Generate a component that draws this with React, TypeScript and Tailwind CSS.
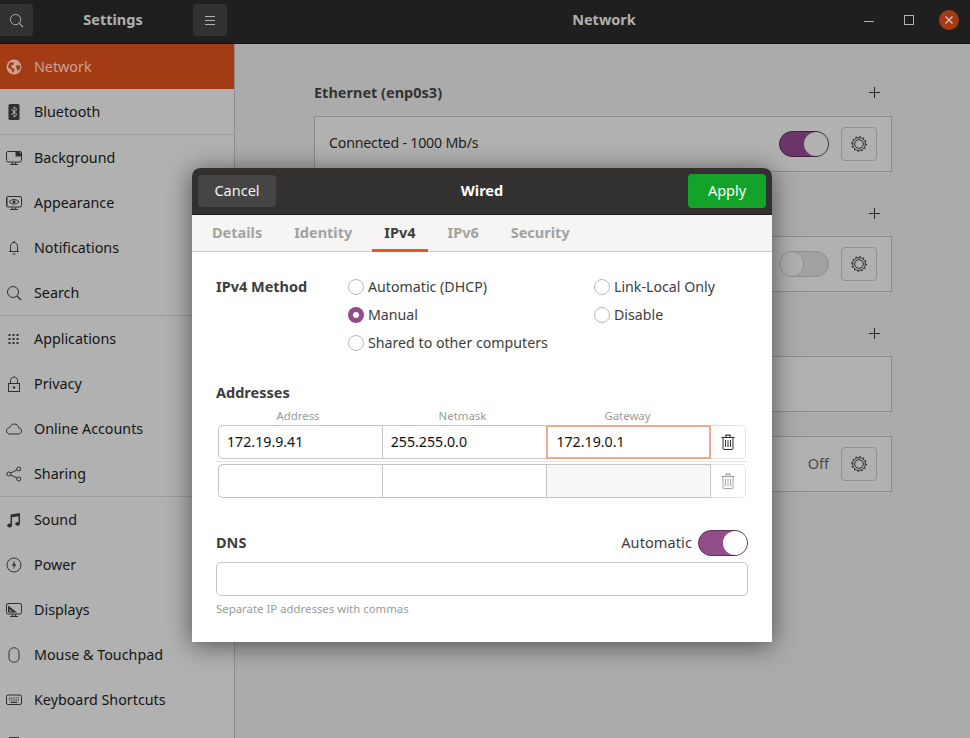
import type { ReactNode } from "react";

const FONT = "font-['Noto_Sans','Open_Sans',sans-serif]";

const Glyph = ({ children, className = "w-4 h-4" }: { children: ReactNode; className?: string }) => (
  <svg viewBox="0 0 16 16" fill="none" stroke="currentColor" strokeWidth="1" className={className}>
    {children}
  </svg>
);

const ICONS: Record<string, ReactNode> = {
  network: (
    <>
      <circle cx="8" cy="8" r="7.5" fill="currentColor" stroke="none" />
      <path d="M3 4.500 6 3l2 1-1 2-2 .5L6 9l2 .5.5 2-2 2.500-1-3.500L2 8.500z" fill="#a33c15" stroke="none" />
      <path d="M10 6.500 13.500 6l1 3-2.500 3-1.500-2.500z" fill="#a33c15" stroke="none" />
    </>
  ),
  bluetooth: (
    <>
      <rect x="2.500" y="0" width="11" height="16" rx="1.500" fill="currentColor" stroke="none" />
      <path d="M5 5.200 11 10.500 8 13.200V2.800l3 2.700L5 10.800" stroke="#b1b1b1" strokeWidth="1" />
    </>
  ),
  background: (
    <>
      <rect x="0.500" y="1.500" width="15" height="10.500" rx="1.500" />
      <path d="M9.500 2v4.500H15V3.500L13.500 2z" fill="currentColor" stroke="none" />
      <path d="M4 14.500h8M6.500 12.500v2h3v-2" strokeWidth="1.200" />
    </>
  ),
  appearance: (
    <>
      <rect x="0.500" y="1.500" width="15" height="10.500" rx="1.500" />
      <path d="M3 6.800c2.800-3 7.200-3 10 0-2.800 3-7.200 3-10 0z" />
      <circle cx="8" cy="6.800" r="1.500" fill="currentColor" stroke="none" />
      <path d="M1.500 3.500v7" strokeDasharray="1 1" strokeWidth="1" />
      <path d="M4 14.500h8M6.500 12.500v2h3v-2" strokeWidth="1.200" />
    </>
  ),
  notifications: (
    <>
      <path d="M4.500 11.500V6.500C4.500 4 6 2.500 8 2.500s3.500 1.500 3.500 4v5zM3 11.500h10" />
      <path d="M8 1v1.500M6.500 14h3" strokeWidth="1.200" />
    </>
  ),
  search: (
    <>
      <circle cx="7" cy="7" r="5.500" />
      <path d="m11 11 4 4" strokeWidth="1.200" />
    </>
  ),
  applications: (
    <g fill="currentColor" stroke="none">
      {[3, 7, 11].flatMap((y) =>
        [2.500, 6.500, 10.500].map((x) => <rect key={`${x}-${y}`} x={x} y={y} width="2" height="2" />)
      )}
    </g>
  ),
  privacy: (
    <>
      <rect x="2.500" y="7.500" width="11" height="8" />
      <path d="M4.500 7.500V4.500C4.500 2.500 6 1 8 1s3.500 1.500 3.500 3.500v3" />
      <circle cx="8" cy="11.500" r="1.200" fill="currentColor" stroke="none" />
    </>
  ),
  online: (
    <path d="M4 13C1.800 13 .5 11.500.5 9.800.5 8 2 6.800 3.500 6.800 4.200 4.500 6 3 8.300 3c2.500 0 4.200 1.800 4.500 4 1.600.2 2.700 1.300 2.700 3 0 1.700-1.300 3-3 3z" />
  ),
  sharing: (
    <>
      <circle cx="2.800" cy="8" r="2" />
      <circle cx="12.800" cy="3" r="2" />
      <circle cx="12.800" cy="13" r="2" />
      <path d="M4.600 7.100 11 3.900M4.600 8.900 11 12.100" />
    </>
  ),
  sound: (
    <g fill="currentColor" stroke="none">
      <path d="M4.500 2.500 14 1v10.500h-1.500V4.200l-6.500 1v8.300H4.500z" />
      <ellipse cx="3.600" cy="13.500" rx="2.400" ry="1.900" />
      <ellipse cx="11.600" cy="11.800" rx="2.400" ry="1.900" />
    </g>
  ),
  power: (
    <>
      <circle cx="8" cy="8" r="7" />
      <path d="M8.800 3.500 5.800 8.500h2l-.6 4 3-5.200H8.200z" fill="currentColor" stroke="none" />
    </>
  ),
  displays: (
    <>
      <rect x="0.500" y="1.500" width="15" height="10.500" rx="1.500" />
      <path d="M2 3.500 11 10.500H2z" fill="currentColor" stroke="none" />
      <path d="M3.500 7.200v2.200h2.700z" fill="#b0b0b0" stroke="none" />
      <path d="M4 14.500h8M6.500 12.500v2h3v-2" strokeWidth="1.200" />
    </>
  ),
  mouse: <rect x="3" y="0.800" width="10" height="14.400" rx="4.500" />,
  keyboard: (
    <>
      <rect x="0.500" y="3" width="15" height="9.500" rx="1.500" />
      <path d="M3 6h10M3 8h10" strokeDasharray="1 .8" />
      <path d="M4.500 10.300h7" strokeWidth="1.200" />
    </>
  ),
  printers: (
    <>
      <rect x="3.500" y="0.500" width="9" height="5" />
      <rect x="0.500" y="5.500" width="15" height="7" rx="1" />
    </>
  ),
};

// the row after Keyboard Shortcuts is cut by the window, only its icon shows
const GROUPS = [
  [
    ["network", "Network"],
    ["bluetooth", "Bluetooth"],
  ],
  [
    ["background", "Background"],
    ["appearance", "Appearance"],
    ["notifications", "Notifications"],
    ["search", "Search"],
  ],
  [
    ["applications", "Applications"],
    ["privacy", "Privacy"],
    ["online", "Online Accounts"],
    ["sharing", "Sharing"],
  ],
  [
    ["sound", "Sound"],
    ["power", "Power"],
    ["displays", "Displays"],
    ["mouse", "Mouse & Touchpad"],
    ["keyboard", "Keyboard Shortcuts"],
    ["printers", ""],
  ],
];

function Sidebar() {
  return (
    <aside className="w-[235px] shrink-0 border-r border-[#8e8e8e] bg-[#b1b1b1] overflow-hidden">
      {GROUPS.map((group, g) => (
        <div key={g} className="border-b border-[#9b9b9b] last:border-b-0">
          {group.map(([icon, label]) => {
            const active = icon === "network";
            return (
              <div
                key={icon}
                className={`h-[45px] flex items-center gap-[12px] pl-[6px] text-[14.300px] ${
                  active ? "bg-[#a33c15] text-[#c9a294]" : "text-[#151515]"
                }`}
              >
                <span className={active ? "text-[#c9a294]" : "text-[#2f2f2f]"}>
                  <Glyph>{ICONS[icon]}</Glyph>
                </span>
                <span>{label}</span>
              </div>
            );
          })}
        </div>
      ))}
    </aside>
  );
}

const GearButton = () => (
  <div className="w-[36px] h-[34px] rounded-[4px] border border-[#8f8f8f] bg-[#b0b0b0] flex items-center justify-center text-[#2c2c2c]">
    <Glyph className="w-[16px] h-[16px]">
      <circle cx="8" cy="8" r="6.400" strokeWidth="1" />
      <circle cx="8" cy="8" r="7.300" strokeWidth="1.100" strokeDasharray="1.500 2.320" />
      <circle cx="8" cy="8" r="4.300" strokeWidth="1" />
    </Glyph>
  </div>
);

const Plus = () => (
  <svg viewBox="0 0 11 11" className="w-[11px] h-[11px] text-[#222]" stroke="currentColor" fill="none">
    <path d="M5.500 0v11M0 5.500h11" />
  </svg>
);

const Switch = ({ on, dim }: { on: boolean; dim?: boolean }) => {
  if (!on) {
    return (
      <div className="w-[50px] h-[26px] rounded-full bg-[#a2a2a2] border border-[#8e8e8e] flex justify-start">
        <div className="w-[24px] h-[24px] rounded-full bg-[#b0b0b0] border-r border-[#8e8e8e]" />
      </div>
    );
  }
  return (
    <div
      className={`w-[50px] h-[26px] rounded-full border flex justify-end ${
        dim ? "bg-[#6a3569] border-[#43233f]" : "bg-[#924d8b] border-[#5f3259]"
      }`}
    >
      <div className={`w-[24px] h-[24px] rounded-full ${dim ? "bg-[#b1b1b1]" : "bg-white"}`} />
    </div>
  );
};

function Panel() {
  return (
    <main className="flex-1 bg-[#ababab] pl-[79px] text-[#1e1e1e]">
      <div className="w-[578px] pt-[36px] flex flex-col">
        <div className="h-[25px] flex items-center justify-between pr-[12px]">
          <span className="font-bold text-[14.500px] text-[#333]">Ethernet (enp0s3)</span>
          <Plus />
        </div>
        <div className="mt-[11px] h-[56px] border border-[#8b8b8b] bg-[#b1b1b1] flex items-center pl-[14px] pr-[14px] gap-[12px] text-[14.200px] tracking-[-0.2px]">
          <span className="flex-1 pb-[2px]">Connected - 1000 Mb/s</span>
          <Switch on dim />
          <GearButton />
        </div>
        <div className="mt-[29px] h-[25px] flex items-center justify-end pr-[12px]">
          <Plus />
        </div>
        <div className="mt-[10px] h-[56px] border border-[#8b8b8b] bg-[#b1b1b1] flex items-center justify-end pr-[14px] gap-[12px]">
          <Switch on={false} />
          <GearButton />
        </div>
        <div className="mt-[29px] h-[25px] flex items-center justify-end pr-[12px]">
          <Plus />
        </div>
        <div className="mt-[10px] h-[56px] border border-[#8b8b8b] bg-[#b1b1b1]" />
        <div className="mt-[24px] h-[56px] border border-[#8b8b8b] bg-[#b1b1b1] flex items-center justify-end pr-[14px] gap-[12px] text-[14.500px] text-[#4a4a4a]">
          <span>Off</span>
          <GearButton />
        </div>
      </div>
    </main>
  );
}

const Radio = ({ label, on }: { label: string; on?: boolean }) => (
  <div className="h-[28px] flex items-center gap-[4px] text-[14.200px] text-[#3d3d3d]">
    {on ? (
      <span className="w-[16px] h-[16px] rounded-full bg-[#924d8b] flex items-center justify-center">
        <span className="w-[6px] h-[6px] rounded-full bg-white" />
      </span>
    ) : (
      <span className="w-[16px] h-[16px] rounded-full border border-[#b9b9b9] bg-white" />
    )}
    <span>{label}</span>
  </div>
);

const Trash = ({ dim }: { dim?: boolean }) => (
  <svg
    viewBox="0 0 14 16"
    fill="none"
    stroke="currentColor"
    className={`w-[14px] h-[16px] ${dim ? "text-[#a3a3a3]" : "text-[#2f2f2f]"}`}
  >
    <path d="M.5 3.500h13M5 3V1.200h4V3" strokeWidth="1.200" />
    <path d="M2 3.500v11c0 .6.400 1 1 1h8c.6 0 1-.4 1-1v-11" />
    <path d="M4.500 6v7M7 6v7M9.500 6v7" />
  </svg>
);

const AddressRow = ({ values, focused }: { values: string[]; focused?: boolean }) => (
  <div className="flex h-[34px] mx-[2px] text-[14.200px] text-[#111]">
    <div className="w-[164px] rounded-l-[5px] border border-r-0 border-[#c4c4c4] pl-[8px] flex items-center bg-white">
      {values[0]}
    </div>
    <div className="w-[165px] border border-r-0 border-[#c4c4c4] pl-[8px] flex items-center bg-white">
      {values[1]}
    </div>
    <div
      className={`w-[165px] pl-[8px] flex items-center border ${
        focused ? "border-2 border-[#f3a78c] pl-[7px] bg-white" : "border-[#c4c4c4] bg-[#f8f8f8]"
      }`}
    >
      {values[2]}
    </div>
    <div className="w-[35px] rounded-r-[5px] border border-l-0 border-[#e2e2e2] flex items-center justify-center bg-white">
      <Trash dim={!focused} />
    </div>
  </div>
);

function WiredDialog() {
  const tabs = ["Details", "Identity", "IPv4", "IPv6", "Security"];
  return (
    <div className="absolute left-[192px] top-[168px] w-[580px] h-[474px] rounded-t-[8px] bg-white shadow-[0_3px_26px_rgba(0,0,0,0.55)] flex flex-col overflow-hidden">
      <header className="h-[47px] shrink-0 bg-[#333030] border-b border-[#1f1e1e] flex items-center justify-between pl-[6px] pr-[6px]">
        <div className="w-[78px] h-[32px] rounded-[4px] bg-[#474543] text-[#f2f2f2] text-[14.500px] flex items-center justify-center">
          Cancel
        </div>
        <span className="font-bold text-[14.500px] text-white">Wired</span>
        <div className="w-[78px] h-[34px] rounded-[4px] bg-[#13a32a] text-white text-[14.500px] flex items-center justify-center">
          Apply
        </div>
      </header>
      <nav className="h-[37px] shrink-0 bg-[#f6f5f4] border-b border-[#c9c9c9] flex pl-[8px] font-bold text-[14.500px] text-[#a2a2a2]">
        {tabs.map((t) => (
          <div
            key={t}
            className={`px-[12px] pt-[1px] mr-[8px] flex items-center border-b-[3px] -mb-px ${
              t === "IPv4" ? "border-[#e95420] text-[#3d3d3d]" : "border-transparent"
            }`}
          >
            {t}
          </div>
        ))}
      </nav>
      <section className="flex-1 px-[24px] pt-[21px] text-[#3d3d3d]">
        <div className="flex">
          <div className="w-[132px] h-[28px] flex items-center font-bold text-[14.500px]">IPv4 Method</div>
          <div className="w-[246px]">
            <Radio label="Automatic (DHCP)" />
            <Radio label="Manual" on />
            <Radio label="Shared to other computers" />
          </div>
          <div>
            <Radio label="Link-Local Only" />
            <Radio label="Disable" />
          </div>
        </div>
        <div className="mt-[25px] font-bold text-[14.500px] leading-[20px]">Addresses</div>
        <div className="mt-[6px] flex text-[11.400px] leading-[16px] text-[#9a9a9a] text-center">
          <span className="w-[164px]">Address</span>
          <span className="w-[165px]">Netmask</span>
          <span className="w-[165px]">Gateway</span>
        </div>
        <div className="mt-[1px]">
          <AddressRow values={["172.19.9.41", "255.255.0.0", "172.19.0.1"]} focused />
          <div className="h-[5px] flex items-center">
            <div className="w-full h-px bg-[#e6e6e6]" />
          </div>
          <AddressRow values={["", "", ""]} />
        </div>
        <div className="mt-[32px] h-[26px] flex items-center justify-between">
          <span className="font-bold text-[14.500px]">DNS</span>
          <div className="flex items-center gap-[6px] text-[14.500px] tracking-[0.1px]">
            <span>Automatic</span>
            <Switch on />
          </div>
        </div>
        <div className="mt-[6px] h-[34px] rounded-[5px] border border-[#c4c4c4]" />
        <div className="mt-[5px] text-[11.400px] leading-[16px] text-[#9a9a9a]">Separate IP addresses with commas</div>
      </section>
    </div>
  );
}

export default function App() {
  return (
    <div className={`${FONT} relative w-[970px] h-[738px] overflow-hidden flex flex-col`}>
      <div className="h-[44px] shrink-0 bg-[#201f1f] border-b border-[#111] pb-[3px] flex items-center text-[#b1b1b1]">
        <div className="w-[235px] shrink-0 flex items-center justify-between pr-[8px]">
          <div className="w-[33px] h-[32px] rounded-r-[4px] bg-[#333232] flex items-center justify-center">
            <Glyph className="w-[15px] h-[15px]">{ICONS.search}</Glyph>
          </div>
          <span className="font-bold text-[14.500px]">Settings</span>
          <div className="w-[34px] h-[32px] rounded-[4px] bg-[#333232] flex items-center justify-center">
            <svg viewBox="0 0 10 9" className="w-[10px] h-[9px]" stroke="currentColor" fill="none">
              <path d="M0 .5h10M0 4.500h10M0 8.500h10" />
            </svg>
          </div>
        </div>
        <span className="flex-1 text-center font-bold text-[14.500px] pl-[113px]">Network</span>
        <div className="w-[110px] shrink-0 flex items-center pl-[4px]">
          <div className="w-[10px] h-[10px] mt-[12px] border-t border-[#b1b1b1]" />
          <div className="ml-[30px] w-[8px] h-[8px] box-content border border-[#b1b1b1]" />
          <div className="ml-[25px] w-[20px] h-[20px] rounded-full bg-[#a33c15] flex items-center justify-center">
            <svg viewBox="0 0 8 8" className="w-[8px] h-[8px] text-[#d8c6bf]" stroke="currentColor" strokeWidth="1.200" fill="none">
              <path d="m.5.5 7 7M7.500.5l-7 7" />
            </svg>
          </div>
        </div>
      </div>
      <div className="flex flex-1 min-h-0">
        <Sidebar />
        <Panel />
      </div>
      <WiredDialog />
    </div>
  );
}
